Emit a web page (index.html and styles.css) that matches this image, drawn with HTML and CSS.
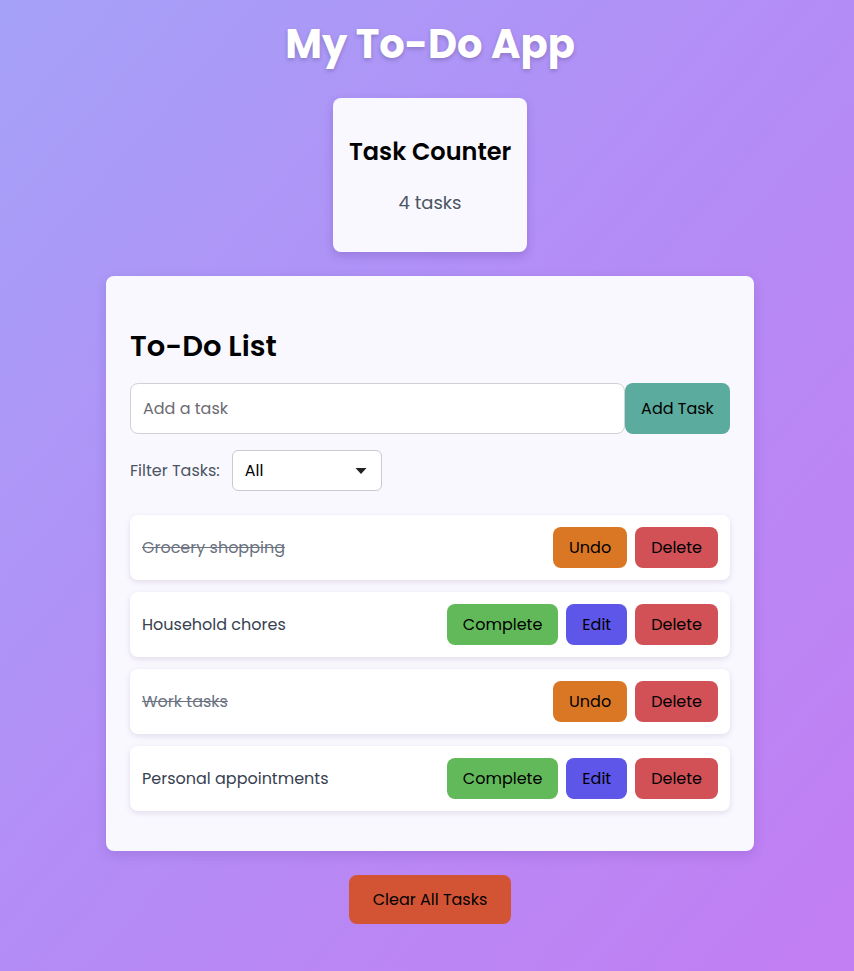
FILE: index.html
```html
<!DOCTYPE html>
<html lang="en">
<head>
<meta charset="utf-8">
<title>My To-Do App</title>
<link rel="stylesheet" href="styles.css">
</head>
<body>
<div class="app">
  <h1 class="app-title">My To-Do App</h1>

  <section class="counter-card">
    <h2 class="counter-title">Task Counter</h2>
    <p class="counter-value">4 tasks</p>
  </section>

  <section class="todo-card">
    <h2 class="todo-title">To-Do List</h2>
    <div class="add-row">
      <input class="task-input" type="text" placeholder="Add a task">
      <button class="btn btn-add">Add Task</button>
    </div>
    <div class="filter-row">
      <label class="filter-label">Filter Tasks:</label>
      <div class="select">
        <span class="select-value">All</span>
        <svg class="select-arrow" width="12" height="8" viewBox="0 0 12 8"><path d="M0.5 1 L11.5 1 L6 7 Z" fill="#222"/></svg>
      </div>
    </div>
    <ul class="task-list">
      <li class="task">
        <span class="task-text done">Grocery shopping</span>
        <div class="task-actions">
          <button class="btn btn-undo">Undo</button>
          <button class="btn btn-delete">Delete</button>
        </div>
      </li>
      <li class="task">
        <span class="task-text">Household chores</span>
        <div class="task-actions">
          <button class="btn btn-complete">Complete</button>
          <button class="btn btn-edit">Edit</button>
          <button class="btn btn-delete">Delete</button>
        </div>
      </li>
      <li class="task">
        <span class="task-text done">Work tasks</span>
        <div class="task-actions">
          <button class="btn btn-undo">Undo</button>
          <button class="btn btn-delete">Delete</button>
        </div>
      </li>
      <li class="task">
        <span class="task-text">Personal appointments</span>
        <div class="task-actions">
          <button class="btn btn-complete">Complete</button>
          <button class="btn btn-edit">Edit</button>
          <button class="btn btn-delete">Delete</button>
        </div>
      </li>
    </ul>
  </section>

  <button class="btn btn-clear">Clear All Tasks</button>
</div>
</body>
</html>
```

FILE: styles.css
```css
* {
  box-sizing: border-box;
}

html, body {
  margin: 0;
  padding: 0;
}

body {
  min-height: 971px;
  background: linear-gradient(to bottom right, #a5a1f8 0%, #b48cf5 50%, #c27ef3 100%);
  font-family: "Poppins", "Inter", "DejaVu Sans", sans-serif;
  color: #111;
}

.app {
  display: flex;
  flex-direction: column;
  align-items: center;
  padding-top: 14px;
  padding-left: 6px;
  padding-bottom: 40px;
}

.app-title {
  margin: 0;
  font-size: 40px;
  line-height: 60px;
  font-weight: 700;
  color: #fff;
  text-shadow: 0 2px 4px rgba(0, 0, 0, 0.2);
}

.counter-card {
  margin-top: 24px;
  width: 194px;
  padding: 16px;
  background: #faf8ff;
  border-radius: 8px;
  box-shadow: 0 4px 10px rgba(60, 30, 120, 0.2);
  text-align: center;
}

.counter-title {
  margin: 20px 0 0;
  font-size: 24px;
  line-height: 36px;
  font-weight: 600;
  color: #000;
  white-space: nowrap;
}

.counter-value {
  margin: 19px 0 20px;
  font-size: 18px;
  line-height: 27px;
  color: #4b5563;
}

.todo-card {
  margin-top: 24px;
  width: 648px;
  padding: 24px 24px 24px;
  background: #faf8ff;
  border-radius: 8px;
  box-shadow: 0 4px 12px rgba(60, 30, 120, 0.15);
}

.todo-title {
  margin: 25px 0 16px;
  font-size: 29px;
  line-height: 42px;
  font-weight: 600;
  color: #000;
}

.add-row {
  display: flex;
}

.task-input {
  flex: 1;
  height: 51px;
  padding: 0 12px;
  border: 1px solid #d1d1d6;
  border-radius: 8px;
  background: #fff;
  font-family: inherit;
  font-size: 16px;
  color: #333;
  outline: none;
}

.task-input::placeholder {
  color: #6b6b72;
}

.btn {
  border: none;
  border-radius: 8px;
  font-family: inherit;
  font-size: 16px;
  line-height: 25px;
  color: #000;
  cursor: pointer;
  padding: 8px 16px;
}

.btn-add {
  width: 105px;
  height: 51px;
  padding: 0;
  background: #5bab9e;
}

.filter-row {
  display: flex;
  align-items: center;
  gap: 12px;
  margin-top: 16px;
}

.filter-label {
  font-size: 16px;
  color: #4b5563;
}

.select {
  display: flex;
  align-items: center;
  justify-content: space-between;
  width: 150px;
  height: 41px;
  padding: 0 14px 0 12px;
  background: #fff;
  border: 1px solid #c9c9cf;
  border-radius: 6px;
  font-size: 16px;
  color: #000;
}

.task-list {
  list-style: none;
  margin: 24px 0 16px;
  padding: 0;
  display: flex;
  flex-direction: column;
  gap: 12px;
}

.task {
  display: flex;
  align-items: center;
  justify-content: space-between;
  height: 65px;
  padding: 0 12px;
  background: #fff;
  border-radius: 8px;
  box-shadow: 0 2px 6px rgba(40, 20, 90, 0.12);
}

.task-text {
  font-size: 16px;
  color: #374151;
}

.task-text.done {
  color: #6b7280;
  text-decoration: line-through;
}

.task-actions {
  display: flex;
  gap: 8px;
}

.task-actions .btn {
  height: 41px;
}

.btn-undo {
  background: #da7725;
}

.btn-delete {
  background: #d15157;
}

.btn-complete {
  background: #62b95a;
}

.btn-edit {
  background: #5e56e8;
}

.btn-clear {
  margin-top: 24px;
  width: 162px;
  height: 49px;
  padding: 0;
  background: #d35434;
}
```
